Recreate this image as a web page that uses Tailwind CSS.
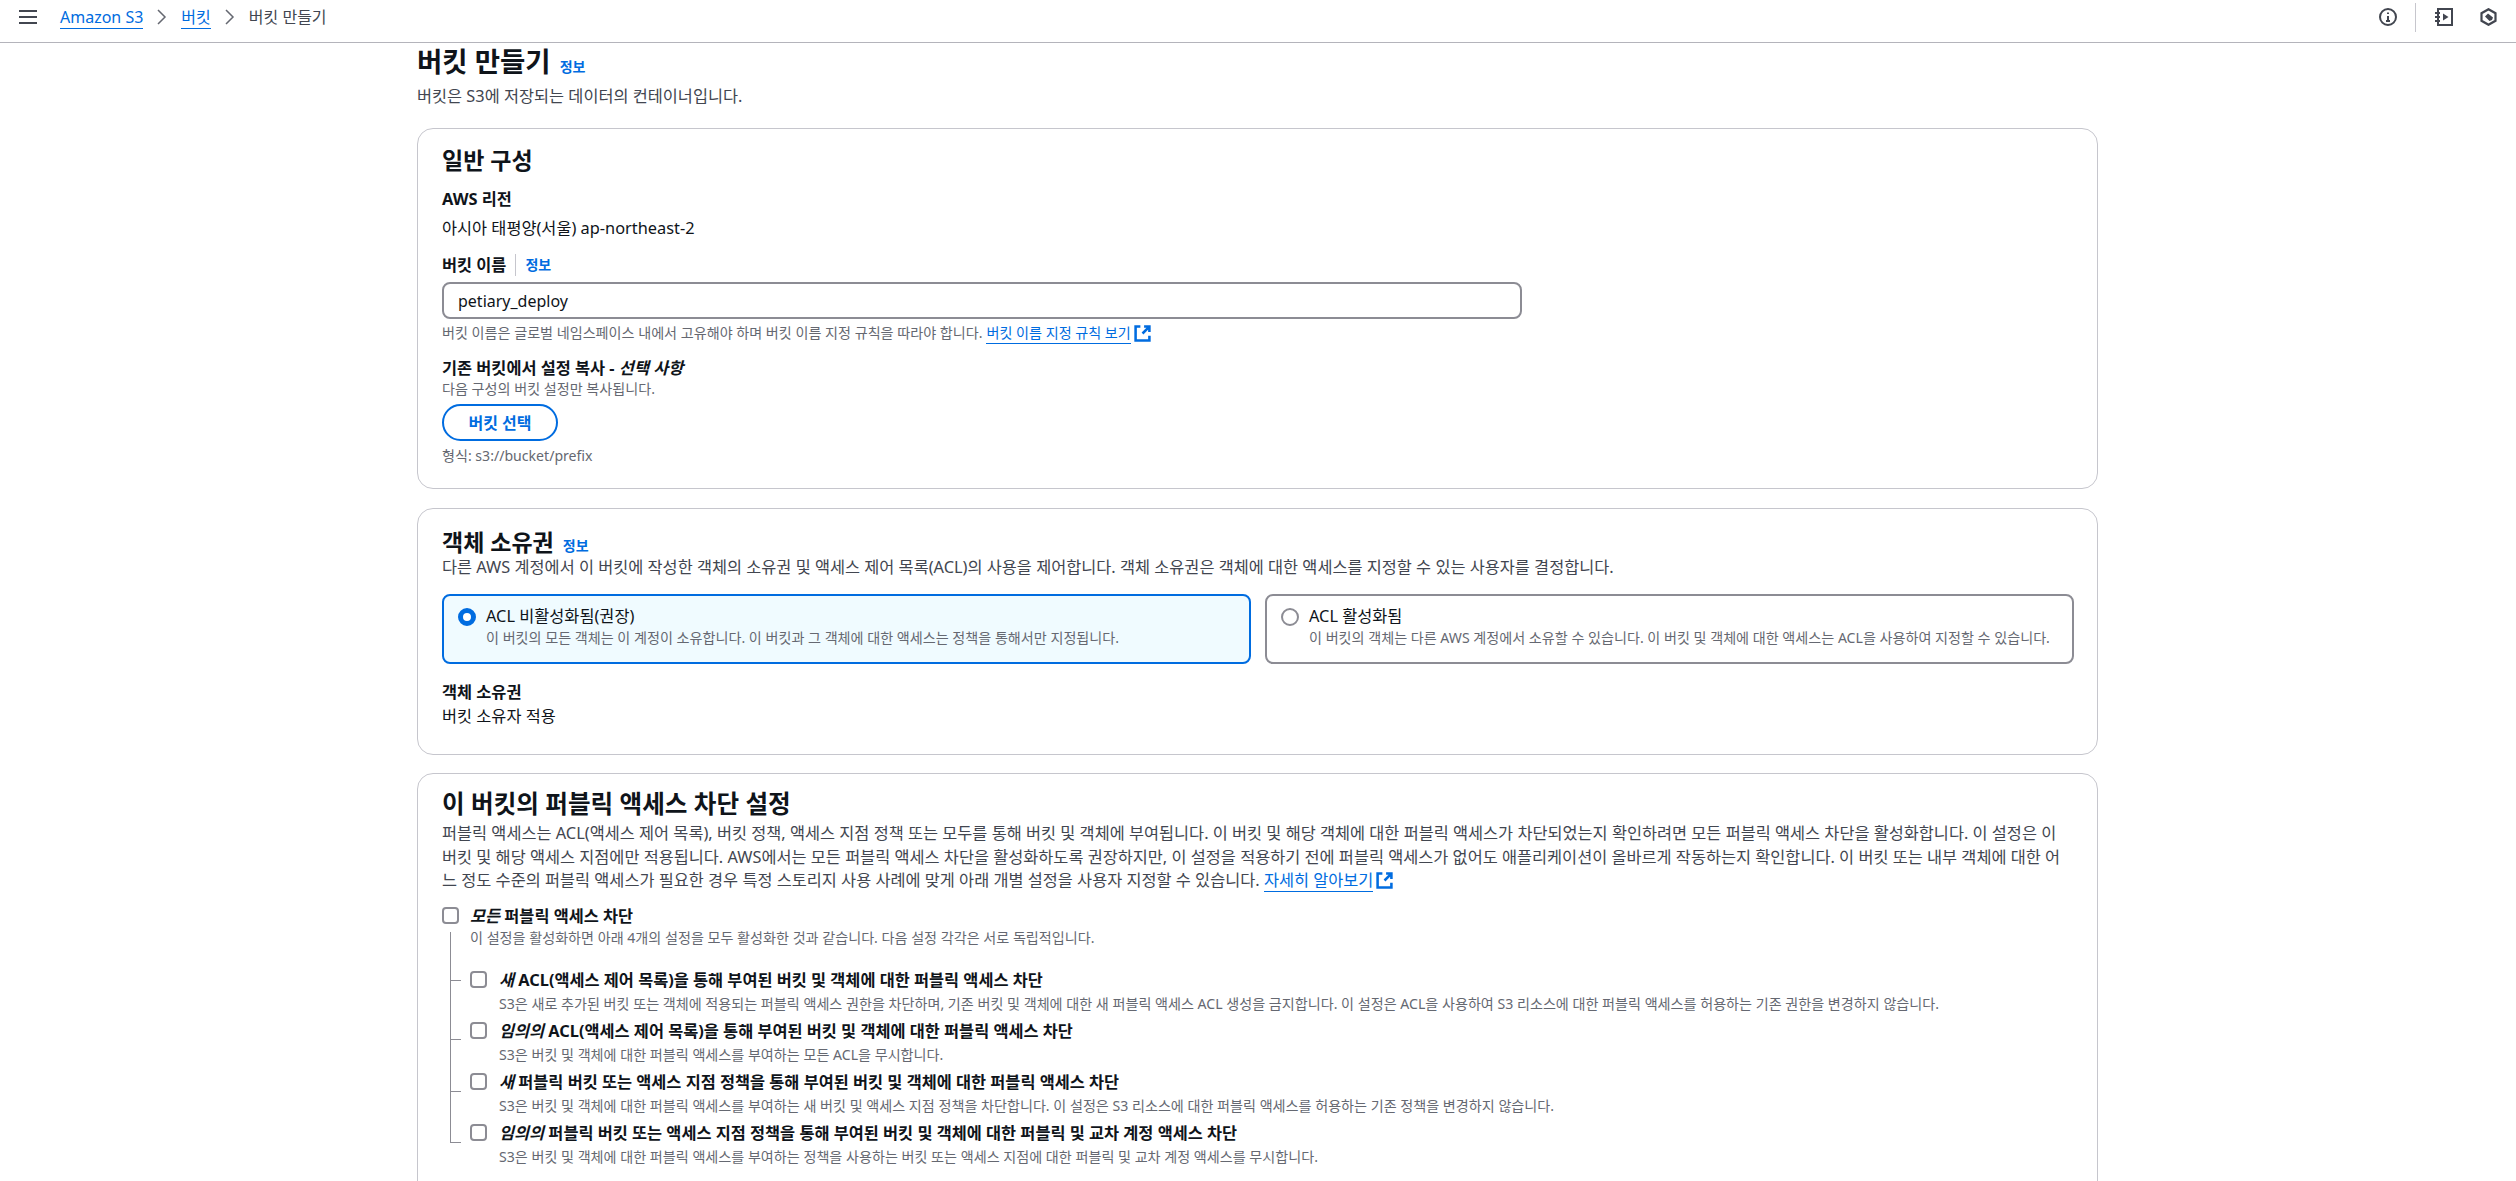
<!DOCTYPE html>
<html lang="ko">
<head>
  <meta charset="UTF-8">
  <title>버킷 만들기</title>
  <script src="https://cdn.jsdelivr.net/npm/@tailwindcss/browser@4"></script>
</head>
<body class="bg-white h-[1181px] overflow-hidden text-[#0f141a] font-['Noto_Sans','Noto_Sans_CJK_KR',sans-serif] text-[16.350px] leading-[20px]">
  <!-- top bar -->
  <header class="h-[43px] border-b border-[#b4b4bb] flex items-center pl-[19px] pr-[19px] pb-[8px]">
    <svg class="w-[18px] h-[16px] text-[#424650]" viewBox="0 0 18 16" fill="none" stroke="currentColor" stroke-width="2.200"><path d="M0 2h18M0 8h18M0 14h18"/></svg>
    <nav class="flex items-center ml-[23px] text-[16px]">
      <a class="text-[#006ce0] border-b border-[#006ce0] leading-[21px] mt-[1px]">Amazon S3</a>
      <svg class="w-[12px] h-[16px] mx-[13px] text-[#656871]" viewBox="0 0 12 16" fill="none" stroke="currentColor" stroke-width="1.500"><path d="M2 1l7 7-7 7"/></svg>
      <a class="text-[#006ce0] border-b border-[#006ce0] leading-[21px] mt-[1px]">버킷</a>
      <svg class="w-[12px] h-[16px] mx-[13px] text-[#656871]" viewBox="0 0 12 16" fill="none" stroke="currentColor" stroke-width="1.500"><path d="M2 1l7 7-7 7"/></svg>
      <span class="text-[#424650]">버킷 만들기</span>
    </nav>
    <div class="ml-auto flex items-center text-[#424650]">
      <svg class="w-[18px] h-[18px]" viewBox="0 0 18 18" fill="none" stroke="currentColor" stroke-width="2"><circle cx="9" cy="9" r="8"/><path d="M9 8v5M7 13h4M9 4.500v1.500"/></svg>
      <div class="w-px h-[29px] bg-[#c6c6cd] mx-[18px]"></div>
      <svg class="w-[19px] h-[18px]" viewBox="0 0 19 18" fill="none" stroke="currentColor" stroke-width="2"><path d="M4 1h14v16H4zM1 5h5M1 9h5M1 13h5"/><path d="M9 5.500l5.500 3.500-5.500 3.500z" fill="currentColor" stroke="none"/></svg>
      <svg class="w-[17px] h-[18px] ml-[27px]" viewBox="0 0 17 18" fill="none" stroke="currentColor" stroke-width="2.200"><path d="M8.500 1.200l7 4v7.600l-7 4-7-4V5.200z"/><path d="M5 8.500l3-3 5 4-1 2.500-2.500 1z" fill="currentColor" stroke="none"/></svg>
    </div>
  </header>

  <main class="ml-[417px] w-[1681px]">
    <div class="h-[85px]">
      <div class="flex items-baseline">
        <h1 class="text-[27.500px] leading-[38px] font-bold">버킷 만들기</h1>
        <a class="ml-[9px] text-[14px] font-bold text-[#006ce0]">정보</a>
      </div>
      <p class="text-[#424650] leading-[24px] mt-[3px]">버킷은 S3에 저장되는 데이터의 컨테이너입니다.</p>
    </div>

    <section class="border border-[#c6c6cd] rounded-[16px] h-[361px] px-[24px] pt-[15px]">
      <h2 class="text-[23px] leading-[32px] font-bold">일반 구성</h2>
      <div class="mt-[11px] font-bold leading-[24px]">AWS 리전</div>
      <div class="mt-[5px] leading-[24px]">아시아 태평양(서울) ap-northeast-2</div>
      <div class="mt-[13px] flex items-center h-[24px]">
        <span class="font-bold">버킷 이름</span>
        <span class="w-px h-[22px] bg-[#c6c6cd] ml-[9px]"></span>
        <a class="ml-[9px] text-[14px] font-bold text-[#006ce0]">정보</a>
      </div>
      <input class="mt-[5px] block w-[1080px] h-[37px] border-2 border-[#8c8c94] rounded-[8px] px-[14px] text-[16px]" value="petiary_deploy">
      <p class="mt-[3px] text-[14.100px] text-[#656871] flex items-center h-[22px]">버킷 이름은 글로벌 네임스페이스 내에서 고유해야 하며 버킷 이름 지정 규칙을 따라야 합니다.
        <a class="ml-[4px] text-[#006ce0] border-b border-[#006ce0] leading-[20px]">버킷 이름 지정 규칙 보기</a>
        <svg class="w-[17px] h-[17px] ml-[3px] text-[#006ce0]" viewBox="0 0 16 16" fill="none" stroke="currentColor" stroke-width="2.400"><path d="M6 1.500H1.500v13h13V10M9.500 1.500h5v5M14.500 1.500L8 8"/></svg>
      </p>
      <div class="mt-[12px] font-bold leading-[24px]">기존 버킷에서 설정 복사 - <i>선택 사항</i></div>
      <div class="text-[14.100px] leading-[18px] text-[#656871]">다음 구성의 버킷 설정만 복사됩니다.</div>
      <button class="mt-[6px] block w-[116px] h-[37px] border-2 border-[#006ce0] rounded-full font-bold text-[#006ce0] text-[16px]">버킷 선택</button>
      <div class="text-[14.100px] text-[#656871] mt-[5px]">형식: s3://bucket/prefix</div>
    </section>

    <section class="mt-[19px] border border-[#c6c6cd] rounded-[16px] h-[247px] px-[24px] pt-[19px]">
      <div class="flex items-baseline">
        <h2 class="text-[23px] leading-[28px] font-bold">객체 소유권</h2>
        <a class="ml-[9px] text-[14px] font-bold text-[#006ce0]">정보</a>
      </div>
      <p class="text-[#424650] leading-[22px]">다른 AWS 계정에서 이 버킷에 작성한 객체의 소유권 및 액세스 제어 목록(ACL)의 사용을 제어합니다. 객체 소유권은 객체에 대한 액세스를 지정할 수 있는 사용자를 결정합니다.</p>
      <div class="mt-[16px] grid grid-cols-2 gap-[14px] w-[1632px]">
        <div class="h-[70px] border-2 border-[#006ce0] bg-[#f0fbff] rounded-[8px] flex pl-[14px] pt-[8px]">
          <span class="mt-[4px] w-[18px] h-[18px] rounded-full border-[5px] border-[#006ce0] bg-white shrink-0"></span>
          <div class="ml-[10px]">
            <div class="leading-[24px]">ACL 비활성화됨(권장)</div>
            <div class="text-[14.100px] leading-[20px] text-[#656871]">이 버킷의 모든 객체는 이 계정이 소유합니다. 이 버킷과 그 객체에 대한 액세스는 정책을 통해서만 지정됩니다.</div>
          </div>
        </div>
        <div class="h-[70px] border-2 border-[#8c8c94] rounded-[8px] flex pl-[14px] pt-[8px]">
          <span class="mt-[4px] w-[18px] h-[18px] rounded-full border-2 border-[#8c8c94] bg-white shrink-0"></span>
          <div class="ml-[10px]">
            <div class="leading-[24px]">ACL 활성화됨</div>
            <div class="text-[14.100px] leading-[20px] text-[#656871]">이 버킷의 객체는 다른 AWS 계정에서 소유할 수 있습니다. 이 버킷 및 객체에 대한 액세스는 ACL을 사용하여 지정할 수 있습니다.</div>
          </div>
        </div>
      </div>
      <div class="mt-[16px] font-bold leading-[24px]">객체 소유권</div>
      <div class="leading-[24px]">버킷 소유자 적용</div>
    </section>

    <section class="mt-[18px] border border-[#c6c6cd] rounded-t-[16px] h-[420px] px-[24px] pt-[13px]">
      <h2 class="text-[24.600px] leading-[34px] font-bold">이 버킷의 퍼블릭 액세스 차단 설정</h2>
      <p class="text-[#424650] leading-[23.500px] w-[1632px] mt-[1px]">퍼블릭 액세스는 ACL(액세스 제어 목록), 버킷 정책, 액세스 지점 정책 또는 모두를 통해 버킷 및 객체에 부여됩니다. 이 버킷 및 해당 객체에 대한 퍼블릭 액세스가 차단되었는지 확인하려면 모든 퍼블릭 액세스 차단을 활성화합니다. 이 설정은 이 버킷 및 해당 액세스 지점에만 적용됩니다. AWS에서는 모든 퍼블릭 액세스 차단을 활성화하도록 권장하지만, 이 설정을 적용하기 전에 퍼블릭 액세스가 없어도 애플리케이션이 올바르게 작동하는지 확인합니다. 이 버킷 또는 내부 객체에 대한 어느 정도 수준의 퍼블릭 액세스가 필요한 경우 특정 스토리지 사용 사례에 맞게 아래 개별 설정을 사용자 지정할 수 있습니다. <a class="text-[#006ce0] border-b border-[#006ce0]">자세히 알아보기</a><svg class="inline w-[17px] h-[17px] ml-[3px] text-[#006ce0] align-[-3px]" viewBox="0 0 16 16" fill="none" stroke="currentColor" stroke-width="2.400"><path d="M6 1.500H1.500v13h13V10M9.500 1.500h5v5M14.500 1.500L8 8"/></svg></p>

      <div class="mt-[11px] flex">
        <span class="mt-[3px] w-[17px] h-[17px] border-2 border-[#8c8c94] rounded-[4px] shrink-0"></span>
        <div class="ml-[11px]">
          <div class="font-bold leading-[24px]"><i>모든</i> 퍼블릭 액세스 차단</div>
          <div class="text-[14.100px] leading-[19px] text-[#656871]">이 설정을 활성화하면 아래 4개의 설정을 모두 활성화한 것과 같습니다. 다음 설정 각각은 서로 독립적입니다.</div>
        </div>
      </div>

      <div class="relative mt-[21px] ml-[28px] flex flex-col gap-[5px]">
        <span class="absolute left-[-20px] top-[-36px] w-px h-[211px] bg-[#8c8c94]"></span>
        <div class="relative flex">
          <span class="absolute left-[-20px] top-[12px] w-[11px] h-px bg-[#8c8c94]"></span>
          <span class="mt-[3px] w-[17px] h-[17px] border-2 border-[#8c8c94] rounded-[4px] shrink-0"></span>
          <div class="ml-[12px]">
            <div class="font-bold leading-[25px]"><i>새</i> ACL(액세스 제어 목록)을 통해 부여된 버킷 및 객체에 대한 퍼블릭 액세스 차단</div>
            <div class="text-[14.100px] leading-[21px] text-[#656871]">S3은 새로 추가된 버킷 또는 객체에 적용되는 퍼블릭 액세스 권한을 차단하며, 기존 버킷 및 객체에 대한 새 퍼블릭 액세스 ACL 생성을 금지합니다. 이 설정은 ACL을 사용하여 S3 리소스에 대한 퍼블릭 액세스를 허용하는 기존 권한을 변경하지 않습니다.</div>
          </div>
        </div>
        <div class="relative flex">
          <span class="absolute left-[-20px] top-[20px] w-[11px] h-px bg-[#8c8c94]"></span>
          <span class="mt-[3px] w-[17px] h-[17px] border-2 border-[#8c8c94] rounded-[4px] shrink-0"></span>
          <div class="ml-[12px]">
            <div class="font-bold leading-[25px]"><i>임의의</i> ACL(액세스 제어 목록)을 통해 부여된 버킷 및 객체에 대한 퍼블릭 액세스 차단</div>
            <div class="text-[14.100px] leading-[21px] text-[#656871]">S3은 버킷 및 객체에 대한 퍼블릭 액세스를 부여하는 모든 ACL을 무시합니다.</div>
          </div>
        </div>
        <div class="relative flex">
          <span class="absolute left-[-20px] top-[21px] w-[11px] h-px bg-[#8c8c94]"></span>
          <span class="mt-[3px] w-[17px] h-[17px] border-2 border-[#8c8c94] rounded-[4px] shrink-0"></span>
          <div class="ml-[12px]">
            <div class="font-bold leading-[25px]"><i>새</i> 퍼블릭 버킷 또는 액세스 지점 정책을 통해 부여된 버킷 및 객체에 대한 퍼블릭 액세스 차단</div>
            <div class="text-[14.100px] leading-[21px] text-[#656871]">S3은 버킷 및 객체에 대한 퍼블릭 액세스를 부여하는 새 버킷 및 액세스 지점 정책을 차단합니다. 이 설정은 S3 리소스에 대한 퍼블릭 액세스를 허용하는 기존 정책을 변경하지 않습니다.</div>
          </div>
        </div>
        <div class="relative flex">
          <span class="absolute left-[-20px] top-[21px] w-[11px] h-px bg-[#8c8c94]"></span>
          <span class="mt-[3px] w-[17px] h-[17px] border-2 border-[#8c8c94] rounded-[4px] shrink-0"></span>
          <div class="ml-[12px]">
            <div class="font-bold leading-[25px]"><i>임의의</i> 퍼블릭 버킷 또는 액세스 지점 정책을 통해 부여된 버킷 및 객체에 대한 퍼블릭 및 교차 계정 액세스 차단</div>
            <div class="text-[14.100px] leading-[21px] text-[#656871]">S3은 버킷 및 객체에 대한 퍼블릭 액세스를 부여하는 정책을 사용하는 버킷 또는 액세스 지점에 대한 퍼블릭 및 교차 계정 액세스를 무시합니다.</div>
          </div>
        </div>
      </div>
    </section>
  </main>
</body>
</html>
